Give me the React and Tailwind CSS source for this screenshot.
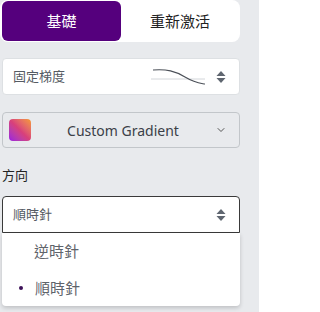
import React from 'react';
import { ChevronDown } from 'lucide-react';

const SortArrows = () => (
  <svg width="10" height="14" viewBox="0 0 10 14" className="text-[#5f6670]">
    <path d="M5 1 L9.5 6 H0.5 Z" fill="currentColor" />
    <path d="M5 13 L9.5 8 H0.5 Z" fill="currentColor" />
  </svg>
);

const App = () => {
  return (
    <div
      className="w-[259px] h-[312px] bg-[#e8eaed] overflow-hidden"
      style={{ fontFamily: '"Noto Sans", "Noto Sans CJK TC", sans-serif' }}
    >
      <div className="w-[240px] pl-[2px]">
        {/* tabs */}
        <div className="flex h-[42px] bg-white rounded-lg p-[1px] -ml-[2px] pl-[2px]">
          <button className="w-[119px] rounded-md bg-[#55007d] text-white text-[15px]">基礎</button>
          <button className="flex-1 text-[#222] text-[15px]">重新激活</button>
        </div>

        {/* curve select */}
        <div className="mt-4 h-[37px] bg-white rounded border border-[#dde0e3] flex items-center pl-[10px] pr-[13px]">
          <span className="text-[13px] text-[#555b63] flex-1">固定梯度</span>
          <svg width="58" height="20" viewBox="0 0 58 20" className="mr-[9px]">
            <line x1="2" y1="12" x2="56" y2="12" stroke="#c8ccd0" strokeWidth="0.8" />
            <path d="M4 3 C 18 2, 26 4, 36 10 S 50 16, 56 17" stroke="#4a4f57" strokeWidth="1.1" fill="none" />
          </svg>
          <SortArrows />
        </div>

        {/* gradient select */}
        <div className="mt-[17px] h-[36px] rounded border border-[#c2c6ca] bg-[#e8eaed] flex items-center pl-[6px] pr-[12px]">
          <div className="w-[22px] h-[22px] rounded-sm bg-gradient-to-tr from-[#9b10e0] via-[#d8407a] to-[#f59a2a]" />
          <span className="flex-1 text-center text-[14px] text-[#3b4048]">Custom Gradient</span>
          <ChevronDown size={12} className="text-[#555]" strokeWidth={2} />
        </div>

        <div className="mt-[21px] text-[13px] text-[#222] leading-none">方向</div>

        {/* direction select */}
        <div className="mt-[14px] h-[37px] bg-white rounded-t border border-[#3a3a3a] flex items-center pl-[10px] pr-[13px]">
          <span className="text-[13px] text-[#555b63] flex-1">順時針</span>
          <SortArrows />
        </div>

        {/* open menu */}
        <div className="bg-white shadow-[0_2px_4px_rgba(0,0,0,0.18)] rounded-b">
          <div className="h-[37px] flex items-center pl-[32px] text-[15px] text-[#5f646b]">逆時針</div>
          <div className="h-[36px] flex items-center pl-[17px] text-[15px] text-[#5f646b]">
            <span className="w-[4px] h-[4px] rounded-full bg-[#3d1158] mr-[12px]" />
            順時針
          </div>
        </div>
      </div>
    </div>
  );
};

export default App;
